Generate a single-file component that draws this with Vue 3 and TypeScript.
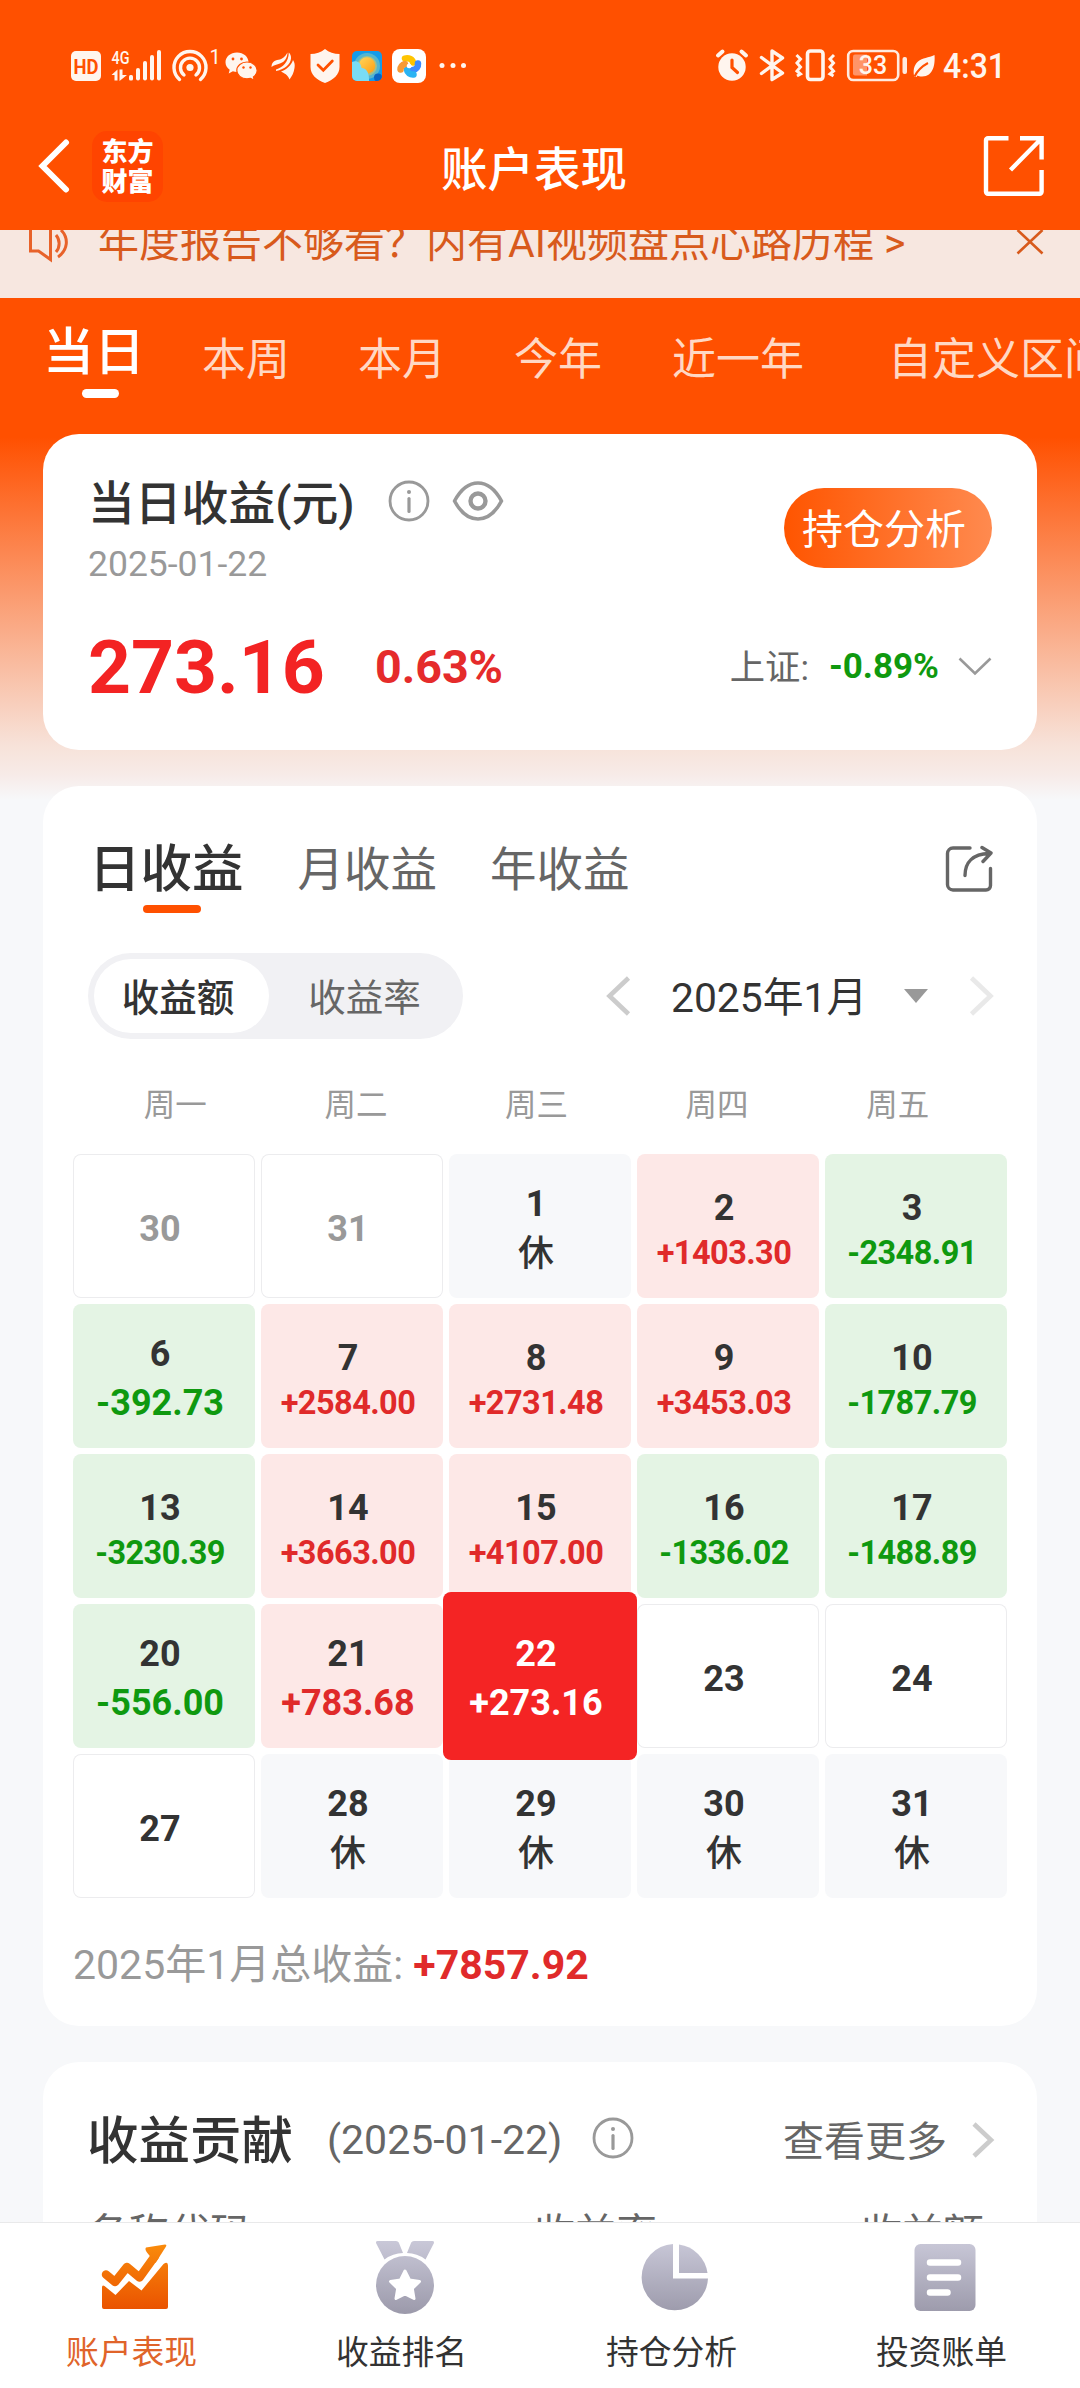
<script setup lang="ts">
type Kind = 'blank' | 'muted' | 'rest' | 'up' | 'down' | 'active'

interface Day {
  day: number
  kind: Kind
  value?: string
}

interface NavItem {
  label: string
  icon: 'chart' | 'medal' | 'pie' | 'doc'
}

const ranges: string[] = ['当日', '本周', '本月', '今年', '近一年', '自定义区间']
const weekdays: string[] = ['周一', '周二', '周三', '周四', '周五']

const days: Day[] = [
  { day: 30, kind: 'muted' },
  { day: 31, kind: 'muted' },
  { day: 1, kind: 'rest', value: '休' },
  { day: 2, kind: 'up', value: '+1403.30' },
  { day: 3, kind: 'down', value: '-2348.91' },
  { day: 6, kind: 'down', value: '-392.73' },
  { day: 7, kind: 'up', value: '+2584.00' },
  { day: 8, kind: 'up', value: '+2731.48' },
  { day: 9, kind: 'up', value: '+3453.03' },
  { day: 10, kind: 'down', value: '-1787.79' },
  { day: 13, kind: 'down', value: '-3230.39' },
  { day: 14, kind: 'up', value: '+3663.00' },
  { day: 15, kind: 'up', value: '+4107.00' },
  { day: 16, kind: 'down', value: '-1336.02' },
  { day: 17, kind: 'down', value: '-1488.89' },
  { day: 20, kind: 'down', value: '-556.00' },
  { day: 21, kind: 'up', value: '+783.68' },
  { day: 22, kind: 'active', value: '+273.16' },
  { day: 23, kind: 'blank' },
  { day: 24, kind: 'blank' },
  { day: 27, kind: 'blank' },
  { day: 28, kind: 'rest', value: '休' },
  { day: 29, kind: 'rest', value: '休' },
  { day: 30, kind: 'rest', value: '休' },
  { day: 31, kind: 'rest', value: '休' },
]

const navItems: NavItem[] = [
  { label: '账户表现', icon: 'chart' },
  { label: '收益排名', icon: 'medal' },
  { label: '持仓分析', icon: 'pie' },
  { label: '投资账单', icon: 'doc' },
]

// Amounts with four integer digits use a smaller type size
const isLong = (d: Day): boolean => (d.value?.length ?? 0) > 7
</script>

<template>
  <div class="page">
    <header class="top">
      <div class="status">
        <svg class="status-left" width="400" height="40" viewBox="70 46 400 40">
          <g fill="#fff5ee">
            <rect x="71" y="51" width="30" height="30" rx="5" />
            <text x="86" y="73.5" font-size="20" font-weight="700" fill="#ff5000" text-anchor="middle" textLength="25" lengthAdjust="spacingAndGlyphs">HD</text>
            <text x="111.500" y="63.500" font-size="18" font-weight="500" textLength="18" lengthAdjust="spacingAndGlyphs">4G</text>
            <path d="M111.500 75l6-5.500V80.500h-3V75zM119.500 69.500h3V75h4.500l-7.500 6z" />
            <rect x="129" y="75" width="4" height="5.500" rx="1.500" />
            <rect x="136" y="68" width="4" height="12.500" rx="2" />
            <rect x="143" y="61" width="4" height="19.500" rx="2" />
            <rect x="150" y="55" width="4" height="25.500" rx="2" />
            <rect x="157" y="50" width="4" height="30.500" rx="2" />
            <circle cx="190" cy="67.500" r="3.600" />
            <text x="209.500" y="64" font-size="20">1</text>
          </g>
          <g fill="none" stroke="#fff5ee" stroke-width="3.400" stroke-linecap="round">
            <path d="M179.500 79.500a16 16 0 1 1 21 0" />
            <path d="M184 75a9.500 9.500 0 1 1 12 0" />
          </g>
          <g fill="#fff5ee">
            <path d="M237 52.500c-6.500 0-11.500 4.300-11.500 9.700 0 3 1.600 5.700 4.200 7.500l-1 3.800 4.200-2.200c1.300.4 2.700.6 4.100.6 6.500 0 11.500-4.300 11.500-9.700s-5-9.700-11.500-9.700z" />
            <path d="M247 62c-5.600 0-10.200 3.700-10.200 8.400s4.600 8.400 10.200 8.400c1.200 0 2.400-.2 3.500-.5l3.800 2-.9-3.400c2.300-1.500 3.800-3.900 3.800-6.500 0-4.700-4.600-8.400-10.200-8.400z" stroke="#ff5000" stroke-width="1.200" />
            <g fill="#ff5000">
              <circle cx="233" cy="59" r="1.400" /><circle cx="241.500" cy="59" r="1.400" />
              <circle cx="243.500" cy="67.500" r="1.200" /><circle cx="250.500" cy="67.500" r="1.200" />
            </g>
            <path d="M271.500 67c.2-5 3-6.500 7-7.200 4-.8 6.500-2.800 9-7.300-.3 5.500-2.500 9-7 10.800-4 1.600-6.500 1.500-9 3.700z" />
            <path d="M276 69.500c7-2 12.500-7.500 12.800-17 1.700 1.500 2.400 3.500 2.200 6-.7 6-5.700 10.500-15 12.500z" />
            <path d="M281 71.500c5.500-2 10.300-6 12-11.500 1.700 2.500 2 5 1.500 8-.7 4.500-2.300 8-5 11.500-1.200-3.200-3-5.400-8.500-8z" />
            <path d="M325 49c4 3.300 9 5 14.500 5v13c0 7.500-6 13-14.500 16-8.500-3-14.500-8.500-14.500-16V54c5.500 0 10.500-1.700 14.500-5z" />
          </g>
          <path d="M318 65l5.300 5.300 9-9.300" fill="none" stroke="#ff5000" stroke-width="2.800" stroke-linecap="round" />
          <defs>
            <clipPath id="blueApp"><rect x="352" y="51" width="30" height="30" rx="5" /></clipPath>
            <linearGradient id="sun" x1="0" y1="0" x2="1" y2="1">
              <stop offset="0" stop-color="#ffd65c" /><stop offset="1" stop-color="#ff9d12" />
            </linearGradient>
          </defs>
          <g clip-path="url(#blueApp)">
            <rect x="352" y="51" width="30" height="30" fill="#159be9" />
            <circle cx="367" cy="66" r="13" fill="#55b6cf" />
            <circle cx="367" cy="66" r="10" fill="#9fc08f" />
            <circle cx="367" cy="65.500" r="8.300" fill="url(#sun)" />
            <path d="M352 62c5-2 9 1 9.500 6 4.500 0 8 4 7.500 13h-17z" fill="#79dcf5" />
            <circle cx="378" cy="77.500" r="4" fill="#0a64c4" />
          </g>
          <rect x="392" y="49" width="34" height="34" rx="8" fill="#fff" />
          <g fill="none" stroke-width="6.500" stroke-linecap="round">
            <path d="M405 58.500a6 5 0 0 1 8 4" stroke="#ffc400" />
            <path d="M418 63.500a6 6 0 0 1-5 6.500" stroke="#3d8bff" />
            <path d="M413.500 74.500a6 5 0 0 1-6.500-4.500" stroke="#2bb3f3" />
            <path d="M400.500 69.500a6 5.500 0 0 1 4.500-5.500" stroke="#f79a35" />
          </g>
          <circle cx="409" cy="66" r="2.300" fill="#fff" />
          <g fill="#fff5ee"><circle cx="442" cy="65.500" r="2.500" /><circle cx="453" cy="65.500" r="2.500" /><circle cx="463.500" cy="65.500" r="2.500" /></g>
        </svg>
        <svg class="status-right" width="300" height="40" viewBox="710 46 300 40">
          <circle cx="732" cy="67" r="13.700" fill="#fff5ee" />
          <path d="M718 55.500l4.500-4M746 55.500l-4.500-4" stroke="#fff5ee" stroke-width="4" stroke-linecap="round" />
          <path d="M732 60v7.500l5.500 5" fill="none" stroke="#ff5000" stroke-width="3.200" stroke-linecap="round" />
          <path d="M761.500 57.500l21 15.500-10.500 6.500V51l10.500 7-21 15.500" fill="none" stroke="#fff5ee" stroke-width="3.400" stroke-linejoin="round" stroke-linecap="round" />
          <rect x="807.500" y="51" width="15.500" height="28.500" rx="3" fill="none" stroke="#fff5ee" stroke-width="3.600" />
          <path d="M796.500 55l4 4-3.500 4 3.500 4-3.500 4 3.500 3-3.500 2M834 55l-4 4 3.500 4-3.500 4 3.500 4-3.500 3 3.500 2" fill="none" stroke="#fff5ee" stroke-width="3" />
          <rect x="848.200" y="51" width="50" height="29" rx="5" fill="none" stroke="#ffeadf" stroke-width="2.600" />
          <path d="M855 54.500h12v21h-12a2 2 0 0 1-2-2v-17a2 2 0 0 1 2-2z" fill="#ff9468" />
          <text x="873" y="74" font-size="25" font-weight="500" fill="#fff5ee" text-anchor="middle">33</text>
          <rect x="902.500" y="57" width="4.500" height="17" rx="2" fill="#ffeadf" />
          <path d="M934.500 55c.8 9-1 22-13 21.500-1.500 0-3-.4-4-1l-1 1.500-2.300-.5c-1.200-6-.5-11 3.800-15 4.500-4 10.500-3.500 16.500-6.500z" fill="#fff5ee" />
          <path d="M914.500 76.500c3-6 7-10 13.500-13.500" fill="none" stroke="#ff5000" stroke-width="2" />
          <text x="943" y="78" font-size="35" font-weight="500" fill="#fff5ee" textLength="63" lengthAdjust="spacingAndGlyphs">4:31</text>
        </svg>
      </div>
      <div class="titlebar">
        <svg class="back" width="32" height="56" viewBox="0 0 32 56"><path d="M28 4.500L4.500 28 28 51.500" fill="none" stroke="#fff" stroke-width="6" stroke-linecap="round" stroke-linejoin="miter" /></svg>
        <div class="logo">东方<br />财富</div>
        <h1>账户表现</h1>
        <svg class="launch" width="62" height="62" viewBox="0 0 62 62" fill="none" stroke="#fff" stroke-width="4.400">
          <path d="M25.500 3.200H5a2 2 0 0 0-2 2v51.600a2 2 0 0 0 2 2h51.600a2 2 0 0 0 2-2V35M37 3.200h21.600V24.500M58 4L27.500 35" />
        </svg>
      </div>
    </header>

    <div class="notice">
      <svg width="42" height="34" viewBox="0 0 42 34" fill="none" stroke="#e8622a" stroke-width="3">
        <path d="M2.500 0v21h8l12 8.500V0M28 5a13 13 0 0 1 0 17M33 0c8 8 7 20-3 27" />
      </svg>
      <span class="notice-text">年度报告不够看？内有AI视频盘点心路历程 &gt;</span>
      <svg class="close" width="28" height="28" viewBox="0 0 28 28"><path d="M1.500 0l25 23.500M26.500 0L1.500 23.500" stroke="#d85a1c" stroke-width="2.600" /></svg>
    </div>

    <nav class="ranges">
      <span v-for="(r, i) in ranges" :key="r" class="range" :class="{ on: i === 0 }">{{ r }}</span>
    </nav>

    <section class="card summary">
      <div class="summary-head">
        <div>
          <div class="summary-title">
            <span>当日收益(元)</span>
            <svg class="info" width="42" height="42" viewBox="0 0 42 42"><circle cx="21" cy="21" r="19" fill="none" stroke="#999" stroke-width="2.800" /><circle cx="21" cy="12" r="2" fill="#999" /><path d="M21 18.500v13" stroke="#999" stroke-width="3.200" stroke-linecap="round" /></svg>
            <svg class="eye" width="52" height="42" viewBox="0 0 52 42" fill="none" stroke="#999"><path d="M2.500 21C9 9 17 3 26 3s17 6 23.500 18C43 33 35 39 26 39S9 33 2.500 21z" stroke-width="3.600" stroke-linejoin="round" /><circle cx="26" cy="21" r="7.500" stroke-width="4.400" /></svg>
          </div>
          <div class="summary-date">2025-01-22</div>
        </div>
        <button class="analyse">持仓分析</button>
      </div>
      <div class="figures">
        <span class="profit">273.16</span>
        <span class="rate">0.63%</span>
        <span class="index">上证:</span>
        <span class="index-rate">-0.89%</span>
        <svg width="34" height="20" viewBox="0 0 34 20"><path d="M1.500 1.500L17 16.500 32.500 1.500" fill="none" stroke="#999" stroke-width="2.600" /></svg>
      </div>
    </section>

    <section class="card calendar">
      <div class="cal-tabs">
        <span class="cal-tab on">日收益</span>
        <span class="cal-tab">月收益</span>
        <span class="cal-tab">年收益</span>
        <svg class="share" width="48" height="48" viewBox="0 0 48 48" fill="none" stroke="#666" stroke-width="3.400" stroke-linecap="round">
          <path d="M25 3H8a5.500 5.500 0 0 0-5.500 5.500v31A5.500 5.500 0 0 0 8 45h33a4.500 4.500 0 0 0 4.500-4.500V23.500" />
          <path d="M20 30.500C20 17 28 9 44 8.500M37 2.500l9 5.500-8 8.500" stroke-linejoin="round" />
        </svg>
      </div>

      <div class="controls">
        <div class="segment"><span class="seg on">收益额</span><span class="seg">收益率</span></div>
        <svg class="prev" width="26" height="40" viewBox="0 0 26 40"><path d="M23.500 2L4.500 20l19 18" fill="none" stroke="#ccc" stroke-width="4.600" /></svg>
        <span class="month">2025年1月</span>
        <svg class="drop" width="24" height="14" viewBox="0 0 24 14"><path d="M0 0h24L12 14z" fill="#999" /></svg>
        <svg class="next" width="26" height="40" viewBox="0 0 26 40"><path d="M2.500 2l19 18-19 18" fill="none" stroke="#e9e9e9" stroke-width="4.600" /></svg>
      </div>

      <div class="weekdays"><span v-for="w in weekdays" :key="w">{{ w }}</span></div>

      <div class="grid">
        <div v-for="(d, i) in days" :key="i" class="cell" :class="[d.kind, { long: isLong(d) }]">
          <span class="day">{{ d.day }}</span>
          <span v-if="d.value" class="value">{{ d.value }}</span>
        </div>
      </div>

      <div class="total">2025年1月总收益: <b>+7857.92</b></div>
    </section>

    <section class="card contribution">
      <div class="contrib-head">
        <h2>收益贡献</h2>
        <span class="contrib-date">(2025-01-22)</span>
        <svg class="info" width="42" height="42" viewBox="0 0 42 42"><circle cx="21" cy="21" r="19" fill="none" stroke="#999" stroke-width="2.800" /><circle cx="21" cy="12" r="2" fill="#999" /><path d="M21 18.500v13" stroke="#999" stroke-width="3.200" stroke-linecap="round" /></svg>
        <span class="more">查看更多</span>
        <svg class="more-arrow" width="24" height="36" viewBox="0 0 24 36"><path d="M3 2l17 16L3 34" fill="none" stroke="#ccc" stroke-width="4.600" /></svg>
      </div>
      <div class="contrib-cols"><span>名称代码</span><span>收益率</span><span>收益额</span></div>
    </section>

    <footer class="tabbar">
      <svg width="0" height="0" class="defs">
        <defs>
          <linearGradient id="cool" gradientUnits="userSpaceOnUse" x1="0" y1="4" x2="0" y2="76"><stop offset="0" stop-color="#c9c8d8" /><stop offset="1" stop-color="#9c9aab" /></linearGradient>
          <linearGradient id="hot" gradientUnits="userSpaceOnUse" x1="0" y1="6" x2="0" y2="72"><stop offset="0" stop-color="#fa8c0c" /><stop offset="1" stop-color="#ea5300" /></linearGradient>
        </defs>
      </svg>
      <div v-for="(n, i) in navItems" :key="n.label" class="nav-item" :class="{ on: i === 0 }">
        <svg width="76" height="80" viewBox="0 0 76 80">
          <template v-if="n.icon === 'chart'">
            <path d="M5 50.500q0-3 2.500-1.500L18.500 58 32 44l12.500 9.500L66.500 27q4.500-3 4.500 1.500V70a2 2 0 0 1-2 2H7a2 2 0 0 1-2-2z" fill="url(#hot)" />
            <path d="M9 37.500l9 7.500 12-15 12.500 10.500L58 19" fill="none" stroke="url(#hot)" stroke-width="8.500" stroke-linecap="round" stroke-linejoin="round" />
            <path d="M49 10.500L68 7.500q2 0 1 2L58.500 26 50 15.500q-2.500-3.500-1-5z" fill="url(#hot)" />
          </template>
          <template v-else-if="n.icon === 'medal'">
            <path d="M10.500 4H29q2 0 2.800 1.500L36 16q-10 0-18.500 6.500L9 6q-.5-2 1.500-2zM65.500 4H47q-2 0-2.800 1.500L40 16q10 0 18.500 6.500L67 6q.5-2-1.500-2z" fill="url(#cool)" />
            <circle cx="38" cy="48" r="29" fill="url(#cool)" />
            <path d="M38 34l4.500 9 10 1.500-7.200 7 1.700 10L38 57l-9 4.500 1.700-10-7.200-7 10-1.500z" fill="#fff" stroke="#fff" stroke-width="3" stroke-linejoin="round" />
          </template>
          <template v-else-if="n.icon === 'pie'">
            <path d="M36 7v34.500h35A33.200 33.200 0 1 1 36 7z" fill="url(#cool)" />
            <path d="M42 7.500A33.200 33.200 0 0 1 70.500 36H42z" fill="url(#cool)" />
          </template>
          <template v-else>
            <rect x="7.500" y="7" width="61" height="67" rx="6" fill="url(#cool)" />
            <path d="M23 25.500h28M23 40.500h28M23 55.500h17.500" stroke="#fff" stroke-width="6.500" stroke-linecap="round" />
          </template>
        </svg>
        <span>{{ n.label }}</span>
      </div>
    </footer>
  </div>
</template>

<style>
body {
  margin: 0;
}
</style>

<style scoped>
.page {
  box-sizing: border-box;
  display: flex;
  flex-direction: column;
  width: 1080px;
  height: 2388px;
  overflow: hidden;
  font-family: Roboto, 'Noto Sans CJK SC', sans-serif;
  color: #333;
  background: linear-gradient(180deg, #ff5000 0, #ff5000 437px, #f7e2d9 745px, #f7ebe8 775px, #f7f8fa 800px);
}
svg {
  display: block;
  flex: none;
}
.top,
.notice,
.ranges,
.card {
  flex: none;
}
.top {
  height: 230px;
  background: #ff5000;
}
.status {
  display: flex;
  justify-content: space-between;
  height: 84px;
  padding: 46px 70px 0;
  box-sizing: border-box;
}
.status-right {
  overflow: visible;
}
.titlebar {
  display: flex;
  align-items: center;
  height: 164px;
  padding: 0 35px 0 38px;
}
.logo {
  width: 71px;
  height: 71px;
  padding-top: 4px;
  box-sizing: border-box;
  margin-left: 22px;
  border-radius: 15px;
  background: #ff4400;
  color: #fff;
  font: 900 26px/30px 'Noto Sans CJK SC', sans-serif;
  text-align: center;
}
h1 {
  margin: 7px 0 0 278px;
  color: #fff;
  font-size: 46.5px;
  font-weight: 500;
  line-height: 60px;
}
.launch {
  margin-left: auto;
}
.notice {
  display: flex;
  height: 68px;
  padding: 0 36px 0 28px;
  box-sizing: border-box;
  overflow: hidden;
  background: #f7e7e0;
  color: #d85a1c;
}
.notice-text {
  margin-left: 28px;
  font-size: 41px;
  line-height: 27px;
  white-space: nowrap;
}
.close {
  margin-left: auto;
}
.ranges {
  display: flex;
  align-items: flex-start;
  height: 136px;
  padding-left: 43px;
  box-sizing: border-box;
  color: #ffd8c4;
  font-size: 44px;
  line-height: 60px;
  white-space: nowrap;
}
.range {
  flex: none;
  margin: 32px 0 0 68px;
}
.range.on {
  position: relative;
  margin: 25px -14px 0 0;
  color: #fff;
  font-size: 51px;
  font-weight: 500;
}
.range.on + .range {
  margin-left: 71px;
}
.range:nth-child(5) {
  margin-left: 70px;
}
.range:last-child {
  margin-left: 84px;
}
.range.on::after {
  content: '';
  position: absolute;
  left: 39px;
  top: 66px;
  width: 37px;
  height: 9px;
  border-radius: 5px;
  background: #fff;
}
.card {
  box-sizing: border-box;
  margin: 0 43px;
  border-radius: 36px;
  background: #fff;
}
.summary {
  height: 316px;
  padding: 40px 45px 0;
}
.summary-head {
  display: flex;
  justify-content: space-between;
  height: 133px;
}
.summary-title {
  display: flex;
  align-items: center;
  font-size: 46.8px;
  font-weight: 500;
  line-height: 60px;
}
.summary-title .info {
  margin: -6px 0 0 33px;
}
.summary-title .eye {
  margin: -6px 0 0 22px;
}
.summary-date {
  margin-top: 3px;
  color: #999;
  font-size: 35.5px;
  line-height: 54px;
}
.analyse {
  width: 208px;
  height: 80px;
  margin: 14px 0 0;
  padding: 4px 8px 0 0;
  border: 0;
  border-radius: 40px;
  background: linear-gradient(90deg, #ff5500, #ff8a4f);
  color: #fff;
  font: 41px/76px Roboto, 'Noto Sans CJK SC', sans-serif;
}
.figures {
  display: flex;
  align-items: center;
  height: 120px;
}
.profit {
  color: #f32323;
  font-size: 75px;
  font-weight: 700;
}
.rate {
  margin-left: 50px;
  color: #e52b2b;
  font-size: 46.6px;
  font-weight: 700;
}
.index {
  margin: -5px 0 0 auto;
  color: #666;
  font-size: 35.3px;
}
.index-rate {
  margin: -2px 19px 0 20px;
  color: #0f990f;
  font-size: 35px;
  font-weight: 700;
}
.calendar {
  height: 1240px;
  margin-top: 36px;
  padding: 50px 0 0;
}
.cal-tabs {
  display: flex;
  align-items: center;
  height: 68px;
  padding: 0 44px 0 46px;
  color: #666;
  font-size: 46.5px;
  line-height: 68px;
}
.cal-tab + .cal-tab {
  margin-left: 53px;
}
.cal-tab.on + .cal-tab {
  margin-left: 54px;
}
.cal-tab.on {
  position: relative;
  color: #333;
  font-size: 51.5px;
  font-weight: 500;
}
.cal-tab.on::after {
  content: '';
  position: absolute;
  left: 54px;
  top: 69px;
  width: 58px;
  height: 8px;
  border-radius: 4px;
  background: #ff5000;
}
.share {
  margin: -2px 0 0 auto;
}
.controls {
  display: flex;
  align-items: center;
  height: 86px;
  margin-top: 49px;
  padding: 0 42px 0 45px;
}
.segment {
  display: flex;
  width: 375px;
  height: 86px;
  padding: 6px;
  box-sizing: border-box;
  border-radius: 43px;
  background: #f1f1f4;
  color: #666;
  font-size: 37.5px;
  line-height: 78px;
  text-align: center;
}
.seg {
  width: 175px;
  margin-left: 8px;
}
.seg.on {
  height: 74px;
  margin: 0;
  padding-right: 7px;
  box-sizing: border-box;
  border-radius: 37px;
  background: #fff;
  color: #333;
  font-weight: 500;
}
.prev {
  margin-left: 142px;
}
.month {
  margin: 4px 0 0 40px;
  font-size: 40.8px;
  line-height: 60px;
  white-space: nowrap;
}
.drop {
  margin-left: auto;
  margin-right: 41px;
}
.weekdays {
  display: flex;
  height: 115px;
  padding: 0 49px 0 42px;
  color: #999;
  font-size: 31.5px;
  line-height: 134px;
  text-align: center;
}
.weekdays span {
  flex: 1;
}
.grid {
  display: grid;
  grid-template-columns: repeat(5, 182px);
  grid-auto-rows: 144px;
  gap: 6px;
  margin-left: 30px;
}
.cell {
  display: flex;
  flex-direction: column;
  align-items: center;
  justify-content: center;
  box-sizing: border-box;
  padding: 6px 8px 0 0;
  border-radius: 8px;
  font-size: 36px;
  font-weight: 700;
  line-height: 49px;
}
.blank,
.muted {
  box-shadow: inset 0 0 0 1px #ececee;
}
.muted {
  color: #999;
}
.rest {
  background: #f7f8fa;
}
.rest .value {
  margin: 1px 0 -1px;
  font-weight: 500;
}
.up {
  background: #fde8e7;
}
.up .value {
  color: #e02a2a;
}
.down {
  background: #e4f4e4;
}
.down .value {
  color: #0f990f;
}
.cell.long {
  padding-top: 9px;
}
.long .day {
  line-height: 44px;
}
.long .value {
  font-size: 32.5px;
  letter-spacing: -0.55px;
  line-height: 46px;
}
.active {
  z-index: 1;
  margin: -12px -6px;
  background: #f42424;
  color: #fff;
}
.total {
  padding: 37px 30px 0;
  color: #999;
  font-size: 41px;
  line-height: 60px;
}
.total b {
  color: #e02a2a;
  font-weight: 700;
}
.contribution {
  height: 200px;
  margin-top: 36px;
  margin-bottom: -40px;
  padding: 49px 42px 0 44px;
}
.contrib-head {
  display: flex;
  align-items: center;
  height: 62px;
  color: #666;
  font-size: 41px;
}
h2 {
  margin: 0;
  color: #333;
  font-size: 51.5px;
  font-weight: 500;
  line-height: 62px;
}
.contrib-date {
  margin: -5px 0 0 34px;
}
.contrib-head .info {
  margin: -8px 0 0 30px;
}
.more {
  margin: -9px 0 0 auto;
}
.more-arrow {
  margin: -4px 0 0 24px;
}
.contrib-cols {
  display: flex;
  margin-top: 31px;
  color: #666;
  font-size: 41px;
  line-height: 60px;
}
.contrib-cols span:nth-child(2) {
  margin-left: 283px;
}
.contrib-cols span:nth-child(3) {
  margin-left: auto;
  margin-right: 11px;
}
.tabbar {
  display: flex;
  flex: none;
  position: relative;
  height: 166px;
  box-sizing: border-box;
  border-top: 1px solid #e9e9ea;
  background: #fff;
  font-size: 32.8px;
}
.defs {
  position: absolute;
}
.nav-item {
  display: flex;
  flex-direction: column;
  align-items: center;
  width: 270px;
  padding-top: 14px;
  box-sizing: border-box;
}
.nav-item span {
  margin: 11px 7px 0 0;
  line-height: 50px;
}
.nav-item.on span {
  color: #e0642a;
}
</style>
